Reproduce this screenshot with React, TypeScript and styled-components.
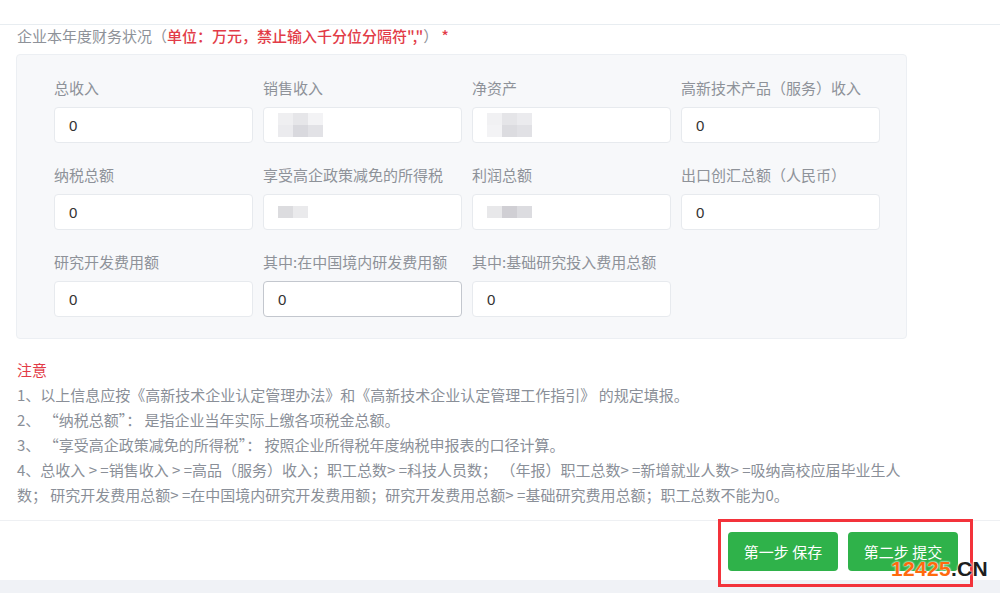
import React from "react";
import styled, { createGlobalStyle } from "styled-components";

const Global = createGlobalStyle`
  html, body { margin: 0; padding: 0; background: #fff; }
  body {
    font-family: "Noto Sans CJK SC", "Noto Sans", "Liberation Sans", sans-serif;
    font-size: 15px;
    color: #606266;
    width: 1000px;
    height: 593px;
    overflow: hidden;
  }
`;

const Page = styled.div`
  position: relative;
  width: 1000px;
  height: 593px;
  display: flex;
  flex-direction: column;
`;

const TopBar = styled.div`
  height: 25px;
  border-bottom: 1px solid #e8edf1;
  box-sizing: border-box;
`;

const Content = styled.div`
  padding: 0 93px 0 16px;
  flex: 1;
`;

const Title = styled.div`
  line-height: 22px;
  font-size: 15px;
  color: #8e9299;
  padding-left: 1px;
`;

const Red = styled.span`
  color: #e23b47;
  font-weight: 500;
`;

const Panel = styled.div`
  margin-top: 7px;
  width: 891px;
  box-sizing: border-box;
  border: 1px solid #eceff3;
  border-radius: 4px;
  background: #f7f8fa;
  padding: 22px 25px 21px 37px;
  display: grid;
  grid-template-columns: repeat(4, 199px);
  column-gap: 10px;
  row-gap: 21px;
`;

const Field = styled.div`
  display: flex;
  flex-direction: column;
  gap: 8px;
`;

const Label = styled.div`
  line-height: 22px;
  font-size: 15px;
  color: #8e9299;
  white-space: nowrap;
`;

const InputBox = styled.div<{ $active?: boolean }>`
  height: 36px;
  box-sizing: border-box;
  background: #fff;
  border: 1px solid ${(p) => (p.$active ? "#c3c7ce" : "#e7eaee")};
  border-radius: 4px;
  padding: 0 14px;
  display: flex;
  align-items: center;
  font-size: 15px;
  color: #333;
  font-family: "Liberation Sans", "Noto Sans CJK SC", sans-serif;
`;

const Mosaic = styled.div`
  display: grid;
  grid-template-columns: repeat(3, 15px);
  grid-auto-rows: 12px;
  filter: blur(0.6px);
`;

const Cell = styled.div<{ $c: string }>`
  background: ${(p) => p.$c};
`;

const Notes = styled.div`
  margin-top: 18px;
  padding-left: 1px;
  width: 885px;
  font-size: 15px;
  line-height: 25px;
  color: #8a8f98;
`;

const NoteTitle = styled.div`
  color: #e23b47;
`;

const Footer = styled.div`
  position: relative;
  height: 60px;
  box-sizing: border-box;
  border-top: 1px solid #eef0f3;
  display: flex;
  justify-content: flex-end;
  align-items: flex-start;
  gap: 10px;
  padding: 11px 42px 0 0;
`;

const Button = styled.button`
  height: 39px;
  width: 110px;
  border: none;
  border-radius: 4px;
  background: #2fb24a;
  color: #fff;
  font-family: "Noto Sans CJK SC", sans-serif;
  font-size: 15px;
  padding: 0;
  cursor: pointer;
`;

const Annotation = styled.div`
  position: absolute;
  left: 718px;
  top: -2px;
  width: 255px;
  height: 68px;
  box-sizing: border-box;
  border: 3px solid #f3333b;
  pointer-events: none;
`;

const BottomBand = styled.div`
  height: 13px;
  background: #f0f2f6;
`;

const Watermark = styled.div`
  position: absolute;
  right: 12px;
  bottom: 13px;
  font-family: "Liberation Sans", sans-serif;
  font-weight: 700;
  font-size: 21px;
  letter-spacing: 0.3px;
  line-height: 22px;
  text-shadow: 0 0 2px #fff, 0 0 2px #fff;
`;

const Orange = styled.span`
  color: #ff6a0d;
`;

const Dark = styled.span`
  color: #1e1e1e;
`;

type Blur = string[];

const blurA: Blur = ["#efeff1", "#e6e6e9", "#f3f3f5", "#ebebee", "#d9d9de", "#e2e2e6"];
const blurB: Blur = ["#f1f1f3", "#e5e5e8", "#ebebee", "#f3f3f5", "#dcdce0", "#e1e1e5"];
const blurC: Blur = ["#dcdcdf", "#eaeaec", "#ffffff"];
const blurD: Blur = ["#e8e8ea", "#d0cfd4", "#dcdce0"];

type FieldDef = { label: string; value?: string; blur?: Blur; active?: boolean };

const fields: FieldDef[] = [
  { label: "总收入", value: "0" },
  { label: "销售收入", blur: blurA },
  { label: "净资产", blur: blurB },
  { label: "高新技术产品（服务）收入", value: "0" },
  { label: "纳税总额", value: "0" },
  { label: "享受高企政策减免的所得税", blur: blurC },
  { label: "利润总额", blur: blurD },
  { label: "出口创汇总额（人民币）", value: "0" },
  { label: "研究开发费用额", value: "0" },
  { label: "其中:在中国境内研发费用额", value: "0", active: true },
  { label: "其中:基础研究投入费用总额", value: "0" },
];

export default function App() {
  return (
    <Page>
      <Global />
      <TopBar />
      <Content>
        <Title>
          企业本年度财务状况（<Red>单位：万元，禁止输入千分位分隔符","</Red>）<Red> *</Red>
        </Title>
        <Panel>
          {fields.map((f) => (
            <Field key={f.label}>
              <Label>{f.label}</Label>
              <InputBox $active={f.active}>
                {f.blur ? (
                  <Mosaic>
                    {f.blur.map((c, i) => (
                      <Cell key={i} $c={c} />
                    ))}
                  </Mosaic>
                ) : (
                  f.value
                )}
              </InputBox>
            </Field>
          ))}
        </Panel>
        <Notes>
          <NoteTitle>注意</NoteTitle>
          <div>1、以上信息应按《高新技术企业认定管理办法》和《高新技术企业认定管理工作指引》 的规定填报。</div>
          <div>2、 “纳税总额”： 是指企业当年实际上缴各项税金总额。</div>
          <div>3、 “享受高企政策减免的所得税”： 按照企业所得税年度纳税申报表的口径计算。</div>
          <div>
            4、总收入 &gt; =销售收入 &gt; =高品（服务）收入；职工总数&gt; =科技人员数； （年报）职工总数&gt; =新增就业人数&gt; =吸纳高校应届毕业生人数； 研究开发费用总额&gt; =在中国境内研究开发费用额；研究开发费用总额&gt; =基础研究费用总额；职工总数不能为0。
          </div>
        </Notes>
      </Content>
      <Footer>
        <Button>第一步 保存</Button>
        <Button>第二步 提交</Button>
        <Annotation />
      </Footer>
      <BottomBand />
      <Watermark>
        <Orange>12425</Orange>
        <Dark>.CN</Dark>
      </Watermark>
    </Page>
  );
}
